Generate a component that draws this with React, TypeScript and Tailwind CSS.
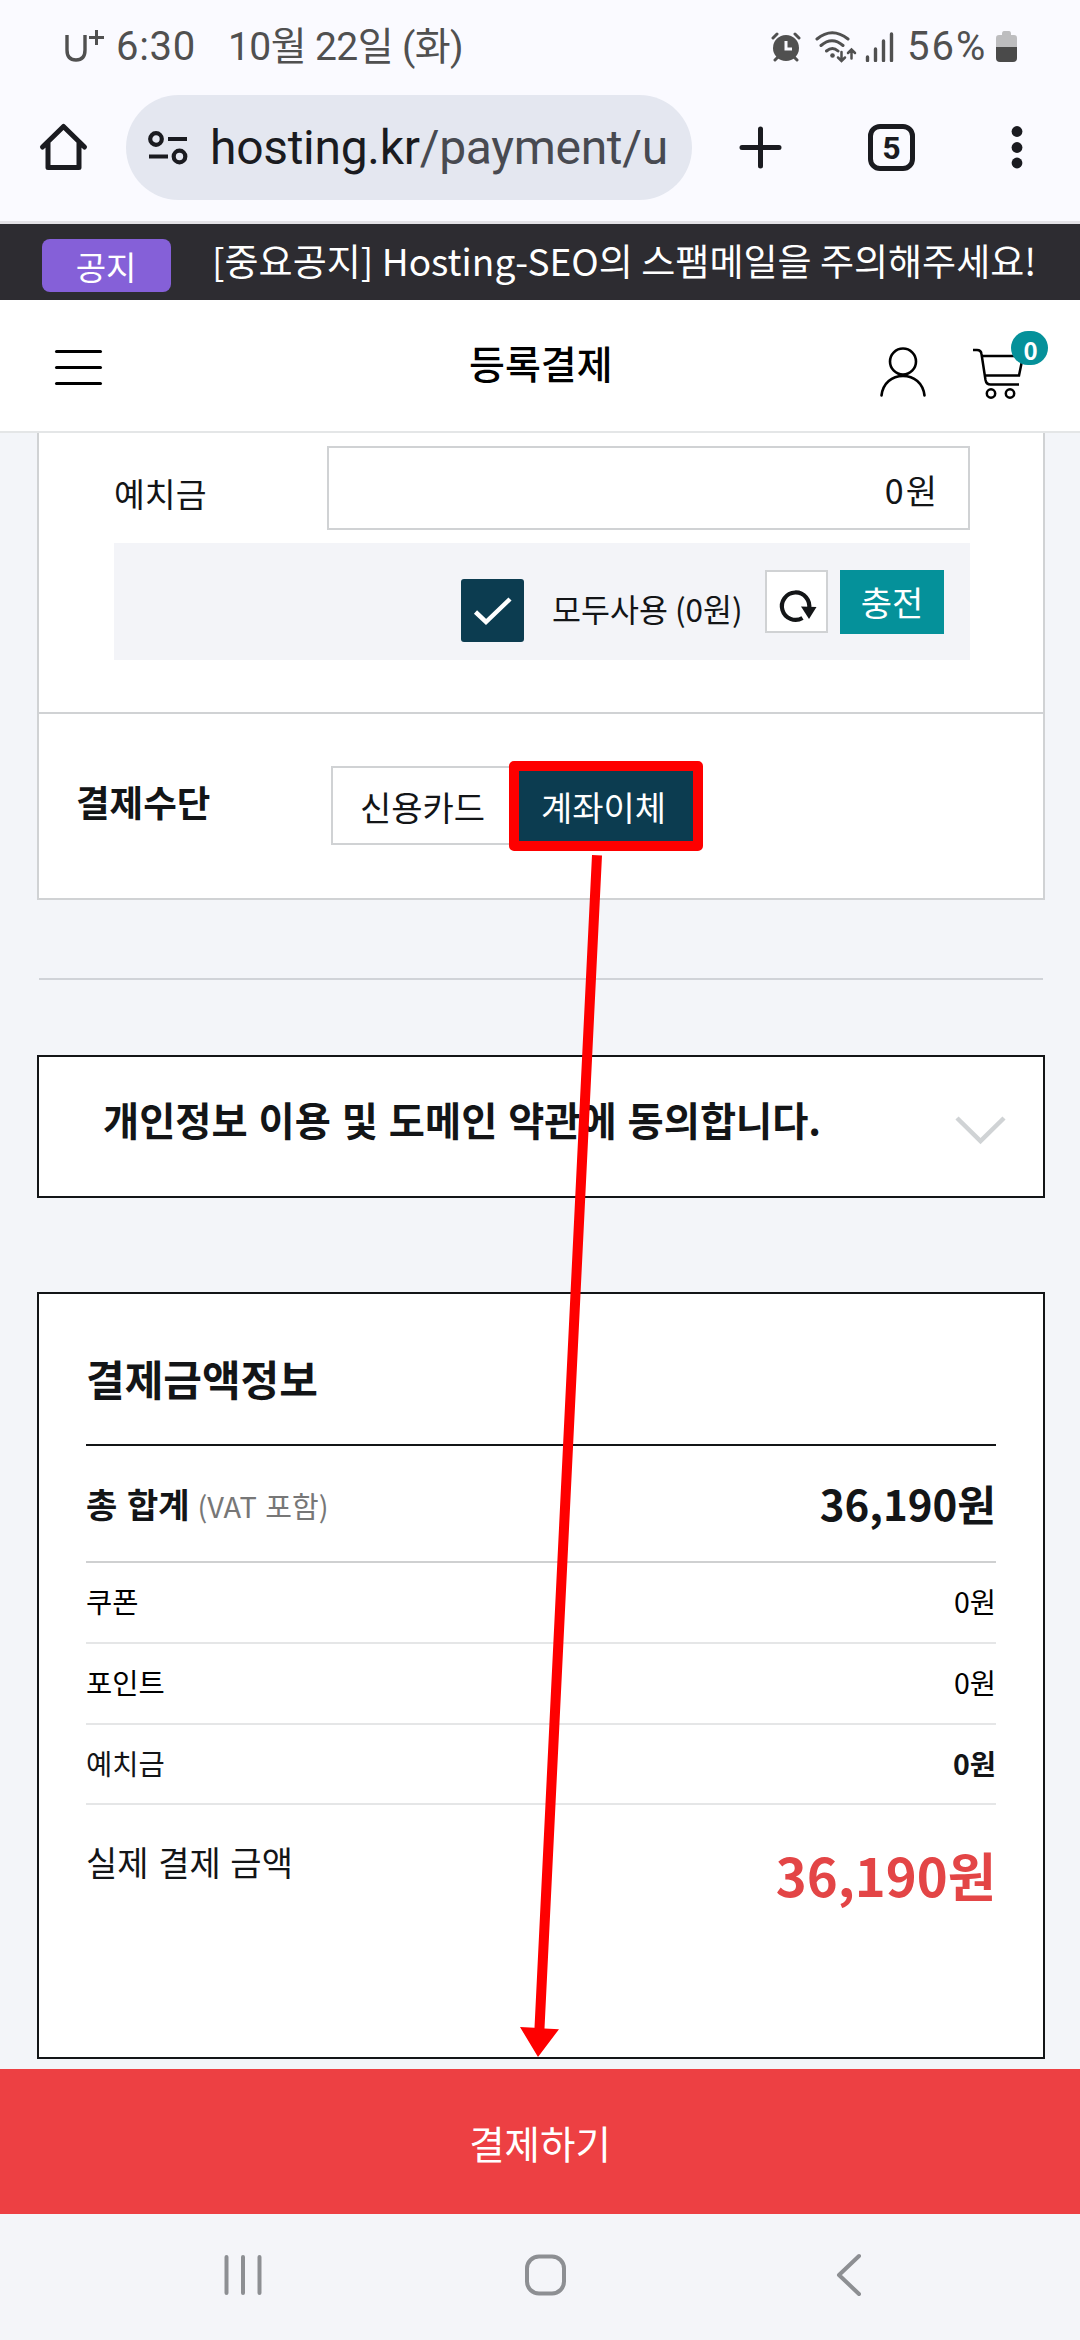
import clsx from "clsx"
import type { ReactNode } from "react"

interface SummaryRowProps {
  label: string
  value: string
  strong?: boolean
  className?: string
}

const rows: SummaryRowProps[] = [
  { label: "쿠폰", value: "0원", className: "h-[81px] text-black" },
  { label: "포인트", value: "0원", className: "h-[81px] text-black" },
  { label: "예치금", value: "0원", strong: true, className: "h-[80px]" },
]

function StatusBar() {
  return (
    <div className="flex h-[95px] justify-between pl-[63px] pr-[63px] text-[39px] leading-[94px] text-[#505050] font-[Roboto,'Noto_Sans_CJK_KR',sans-serif]">
      <div className="flex whitespace-pre">
        <svg className="mt-[28px] h-[36px] w-[42px]" viewBox="0 0 42 36" fill="none" stroke="#505050">
          <path d="M4 7v15q0 10 9 10t9-10V7" strokeWidth="3.4" />
          <path d="M26 9.5h15M33.5 2v15" strokeWidth="3" />
        </svg>
        <span className="ml-[11px] w-[112px] text-[40px] tracking-[0.7px]">6:30</span>
        <span className="tracking-[-0.6px]">10월 22일 (화)</span>
      </div>
      <div className="flex">
        <svg className="mt-[31px] h-[31px] w-[30px]" viewBox="0 0 30 31" fill="none" stroke="#505050" strokeWidth="3" strokeLinecap="round">
          <circle cx="15" cy="17" r="13" fill="#505050" stroke="none" />
          <path d="M2 7l4-4M28 7l-4-4M4 29l3-3M26 29l-3-3" />
          <path d="M15 10v8h6" stroke="#fafaff" strokeLinecap="butt" />
        </svg>
        <svg className="ml-[14px] mt-[30px] h-[33px] w-[42px]" viewBox="0 0 42 33" fill="none" stroke="#505050" strokeWidth="3" strokeLinecap="round">
          <path d="M2 9Q17-3.500 33 9M6 15.500Q17 6 28 15.500M11.500 21Q17.500 16 23 21" />
          <circle cx="17.500" cy="25.500" r="2.300" fill="#505050" stroke="none" />
          <path d="M26.500 22v8.500M23 27.500l3.500 3.500 3.500-3.500M36.500 28.500V20M33 23l3.500-3.500L40 23" strokeWidth="2.500" />
        </svg>
        <svg className="ml-[8px] mt-[31px] h-[31px] w-[30px]" viewBox="0 0 30 31" fill="none" stroke="#505050" strokeWidth="3.400" strokeLinecap="round">
          <path d="M2.500 26v3.500M10.500 18v11.500M18.500 10v19.500M26.500 3v26.500" />
        </svg>
        <span className="ml-[12px] w-[89px] text-[40px] tracking-[2px]">56%</span>
        <svg className="mt-[31px] h-[31px] w-[21px]" viewBox="0 0 21 31">
          <path d="M6 3q0-3 2-3h5q2 0 2 3v1h3q3 0 3 3v9H0V7q0-3 3-3h3z" fill="#bdbdbf" />
          <path d="M0 16h21v11q0 4-4 4H4q-4 0-4-4z" fill="#4a4a4a" />
        </svg>
      </div>
    </div>
  )
}

function BrowserBar() {
  return (
    <div className="flex h-[126px] items-start text-[#1a1b20]">
      <svg className="ml-[38px] mt-[27px] h-[50px] w-[51px]" viewBox="0 0 51 50" fill="none" stroke="currentColor" strokeWidth="5" strokeLinecap="round" strokeLinejoin="round">
        <path d="M4.500 25L25.500 4.500 46.500 25M10 21v24.500h31V21" />
      </svg>
      <div className="ml-[37px] flex h-[105px] w-[566px] items-center rounded-full bg-[#e4e7f0] font-[Roboto,sans-serif]">
        <svg className="ml-[21px] h-[36px] w-[42px]" viewBox="0 0 42 36" fill="none" stroke="currentColor" strokeWidth="4.200">
          <circle cx="9" cy="9" r="5.800" />
          <path d="M21 9h19M2 26.500h19" />
          <circle cx="32.500" cy="26.500" r="5.800" />
        </svg>
        <div className="ml-[21px] whitespace-nowrap text-[48px] leading-[104px] tracking-[-0.3px]">
          hosting.kr<span className="text-[#484a51]">/payment/u</span>
        </div>
      </div>
      <svg className="ml-[46px] mt-[30px] h-[45px] w-[45px]" viewBox="0 0 45 45" fill="none" stroke="currentColor" strokeWidth="5" strokeLinecap="round">
        <path d="M22.500 4v37M4 22.500h37" />
      </svg>
      <div className="ml-[85px] mt-[29px] flex h-[47px] w-[47px] items-center justify-center rounded-[12px] border-5 border-[#1a1b20] text-[32px] font-bold leading-none font-[Roboto,sans-serif]">
        5
      </div>
      <svg className="ml-[96px] mt-[30px] h-[45px] w-[12px]" viewBox="0 0 12 45" fill="currentColor">
        <circle cx="6" cy="6.500" r="5.400" />
        <circle cx="6" cy="22.500" r="5.400" />
        <circle cx="6" cy="38" r="5.400" />
      </svg>
    </div>
  )
}

function NoticeBar() {
  return (
    <div className="flex h-[79px] border-t-3 border-[#e3e2e6] bg-[#2d2c31] text-white">
      <div className="ml-[42px] mt-[15px] h-[53px] w-[129px] rounded-[8px] bg-[#8560d8] pr-[1px] text-center text-[33px] leading-[54px]">공지</div>
      <div className="ml-[41px] whitespace-nowrap text-[37px] leading-[73px] tracking-[0.03px]">[중요공지] Hosting-SEO의 스팸메일을 주의해주세요!</div>
    </div>
  )
}

function SiteHeader() {
  return (
    <header className="relative flex h-[133px] items-start border-b-2 border-[#e4e6e7] bg-white text-black">
      <div className="ml-[55px] mt-[50px] flex w-[47px] flex-col gap-[13px]">
        <span className="h-[3px] rounded-full bg-black" />
        <span className="h-[3px] rounded-full bg-black" />
        <span className="h-[3px] rounded-full bg-black" />
      </div>
      <h1 className="ml-[367px] w-[144px] whitespace-nowrap text-[39px] font-medium leading-[124px]">등록결제</h1>
      <svg className="ml-[266px] mt-[46px] h-[52px] w-[48px]" viewBox="0 0 48 52" fill="none" stroke="currentColor" strokeWidth="2.600" strokeLinecap="round">
        <circle cx="24" cy="15.500" r="13" />
        <path d="M2.500 49.500C4 37 13 30 24 30s20 7 21.500 19.500" />
      </svg>
      <div className="relative ml-[46px] mt-[46px]">
        <svg className="h-[54px] w-[54px]" viewBox="0 0 54 54" fill="none" stroke="currentColor" strokeWidth="2.500">
          <path d="M0 4h4q4 0 4.500 4l4 26q.8 4.500 5 4.500H46M8.500 10H50l-4 19.500H12" />
          <circle cx="18" cy="47.500" r="4.200" />
          <circle cx="37" cy="47.500" r="4.200" />
        </svg>
        <span className="absolute -top-[15px] left-[38px] h-[34px] w-[37px] rounded-full bg-[#05919a] pl-[2px] text-center text-[24px] font-bold leading-[37px] text-white">0</span>
      </div>
    </header>
  )
}

function OutlineBox({ className, children }: { className?: string; children: ReactNode }) {
  return <section className={clsx("mx-[37px] w-[1008px] border-2 border-[#131517] bg-white", className)}>{children}</section>
}

function DepositSection() {
  return (
    <section className="mx-[37px] h-[467px] w-[1008px] border-2 border-t-0 border-[#d0d2d4] bg-white">
      <div className="h-[281px] border-b-2 border-[#d0d2d4] pl-[75px] pt-[13px]">
        <div className="flex h-[84px] w-[856px] justify-between">
          <span className="text-[33.5px] leading-[93px]">예치금</span>
          <div className="h-[84px] w-[643px] border-2 border-[#d0d2d4] pr-[29px] text-right text-[34px] leading-[83px] tracking-[2px]">0원</div>
        </div>
        <div className="mt-[13px] flex h-[117px] w-[856px] items-start justify-end bg-[#f3f4f8] pr-[26px]">
          <div className="mt-[36px] h-[63px] w-[63px] rounded-[3px] bg-[#0c3c50]">
            <svg viewBox="0 0 63 63" fill="none" stroke="white" strokeWidth="4.500">
              <path d="M14.500 33l10.500 10L49 20" />
            </svg>
          </div>
          <span className="ml-[28px] w-[192px] whitespace-nowrap text-[31.500px] leading-[131px]">모두사용 (0원)</span>
          <div className="ml-[21px] mt-[27px] h-[63px] w-[63px] border-2 border-[#d0d2d4] bg-white">
            <svg viewBox="0 0 59 59" fill="none">
              <path d="M35.500 46A13.700 13.700 0 1 1 42 37" stroke="#131517" strokeWidth="4.200" />
              <path d="M34 34.500l15.500.5-7.500 12z" fill="#131517" />
            </svg>
          </div>
          <div className="ml-[12px] mt-[27px] h-[64px] w-[104px] bg-[#05919a] text-center text-[34px] leading-[64px] text-white">충전</div>
        </div>
      </div>
      <div className="flex items-start pl-[37px] pt-[52px]">
        <h2 className="w-[255px] text-[36.500px] font-bold leading-[72px]">결제수단</h2>
        <div className="h-[79px] w-[178px] border-2 border-r-0 border-[#d0d2d4] pl-[27px] text-[34px] leading-[77px]">신용카드</div>
        <div className="-mt-[5px] h-[90px] w-[194px] whitespace-nowrap rounded-[5px] border-10 border-[#fe0000] bg-[#0c3c50] pr-[5px] text-center text-[34px] leading-[72px] text-white">
          계좌이체
        </div>
      </div>
    </section>
  )
}

function SummaryRow({ label, value, strong, className }: SummaryRowProps) {
  return (
    <div className={clsx("flex justify-between border-b-2 border-[#e5e6e7] text-[28.500px] leading-[76px]", className)}>
      <span>{label}</span>
      <span className={strong ? "font-bold" : ""}>{value}</span>
    </div>
  )
}

function PaymentSummary() {
  return (
    <OutlineBox className="mt-[94px] h-[767px] px-[47px]">
      <h2 className="h-[152px] border-b-2 border-[#131517] text-[42px] font-bold leading-[168px]">결제금액정보</h2>
      <div className="flex h-[117px] justify-between border-b-2 border-[#cfd0d1] leading-[115px]">
        <div className="whitespace-nowrap">
          <span className="text-[34px] font-bold leading-[115px] [word-spacing:2px]">총 합계</span>
          <span className="ml-[8px] text-[29px] text-[#777] [word-spacing:2px]">(VAT 포함)</span>
        </div>
        <span className="text-[42px] font-bold leading-[114px]">36,190원</span>
      </div>
      {rows.map((row) => (
        <SummaryRow key={row.label} {...row} />
      ))}
      <div className="flex items-start justify-between">
        <span className="text-[34px] leading-[114px] [word-spacing:2px]">실제 결제 금액</span>
        <span className="text-[52.500px] font-bold leading-[138px] text-[#e34546]">36,190원</span>
      </div>
    </OutlineBox>
  )
}

function NavBar() {
  return (
    <nav className="flex h-[126px] items-start bg-[#f4f5f9] pt-[38px] text-[#8d8f93]">
      <svg className="ml-[222px] h-[46px] w-[42px]" viewBox="0 0 42 46" stroke="currentColor" strokeWidth="4" strokeLinecap="round">
        <path d="M4.500 5v36M21 5v36M37.500 5v36" />
      </svg>
      <svg className="ml-[259px] h-[46px] w-[46px]" viewBox="0 0 46 46" fill="none" stroke="currentColor" strokeWidth="4">
        <rect x="4" y="4.500" width="37" height="37" rx="12" />
      </svg>
      <svg className="ml-[265px] h-[46px] w-[30px]" viewBox="0 0 30 46" fill="none" stroke="currentColor" strokeWidth="4" strokeLinecap="round" strokeLinejoin="round">
        <path d="M25 4L5 23l20 19" />
      </svg>
    </nav>
  )
}

export default function App() {
  return (
    <div className="relative h-[2340px] w-[1080px] overflow-hidden bg-[#f3f5f9] text-[#131517] font-['Noto_Sans_CJK_KR',sans-serif]">
      <div className="bg-[#fafaff]">
        <StatusBar />
        <BrowserBar />
      </div>
      <NoticeBar />
      <SiteHeader />
      <DepositSection />
      <div className="mx-[39px] mt-[78px] w-[1004px] border-t-2 border-[#d0d3d8]" />
      <OutlineBox className="mt-[75px] flex h-[143px] items-start justify-between pl-[64px] pr-[35px]">
        <h2 className="whitespace-nowrap text-[39.300px] font-bold leading-[123px] [word-spacing:2px]">개인정보 이용 및 도메인 약관에 동의합니다.</h2>
        <svg className="mt-[56px] h-[36px] w-[56px]" viewBox="0 0 56 36" fill="none" stroke="#d0d3d5" strokeWidth="4.500">
          <path d="M5 5l23.500 23L52 5" />
        </svg>
      </OutlineBox>
      <PaymentSummary />
      <button className="mt-[10px] block h-[145px] w-full bg-[#ed4043] text-center text-[38.500px] leading-[144px] text-white">결제하기</button>
      <NavBar />
      {/* arrow from the selected method to the pay button */}
      <svg className="absolute left-[510px] top-[850px] h-[1210px] w-[100px]" viewBox="0 0 100 1210" fill="#fe0000">
        <path d="M82 5l10 .4L34.500 1178.500l14.500.7L28 1207 10 1177l14.500.7z" />
      </svg>
    </div>
  )
}
